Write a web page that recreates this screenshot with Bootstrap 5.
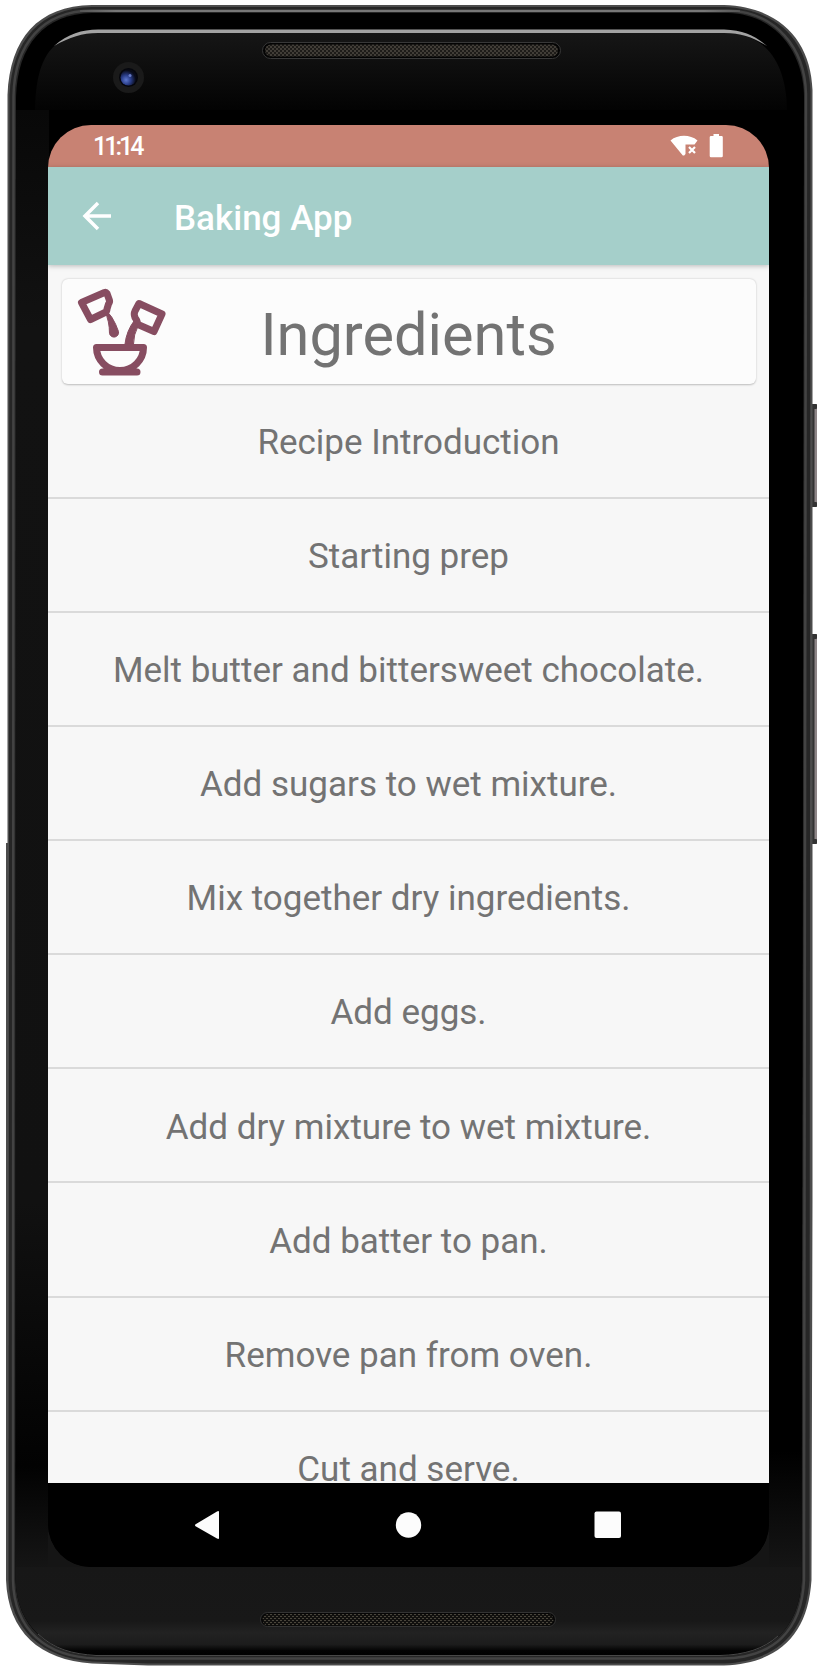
<!DOCTYPE html>
<html lang="en">
<head>
<meta charset="utf-8">
<meta name="viewport" content="width=device-width, initial-scale=1">
<title>Baking App</title>
<link href="https://cdn.jsdelivr.net/npm/bootstrap@5.3.0/dist/css/bootstrap.min.css" rel="stylesheet">
<style>
body{background:#fff;font-family:Roboto,sans-serif;overflow:hidden}
.phone{width:820px;height:1674px;padding:125px 51px 107px 48px}
.phone-shell{z-index:0;pointer-events:none}
.phone-screen{z-index:1;border-radius:43px;background:#000}
.status-bar{height:42px;background:#c88273;color:#fff;padding:0 45px 0 45px;font-size:25px;font-weight:500;line-height:42px}
.clock{letter-spacing:-3px;padding-top:2px}
.app-bar{height:98px;background:#a5cfca;color:#fff;padding:0 32px;box-shadow:0 1px 5px rgba(0,0,0,.25);z-index:2}
.app-title{font-size:35px;font-weight:500;line-height:1;margin-left:58px;padding-top:4px}
.recipe-steps{min-height:0;background:#f7f7f7}
.ingredients-card{margin:14px 13px 0 14px;height:105px;background:#fcfcfc;border:0;border-radius:6px;box-shadow:0 .5px 2px rgba(0,0,0,.24)}
.ingredients-card h1{font-size:59.5px;font-weight:400;color:#737373;line-height:1;padding-top:8px;margin-right:1px}
.pour-icon{left:14px;top:7px}
.step-list{margin-top:.4px}
.step-row{height:114.15px;font-size:35px;color:#737373;background:transparent;border:0;border-bottom:2px solid #dadada;border-radius:0;padding:5px 0 0;flex:none}
.nav-keys{height:84px;background:#000}
</style>
</head>
<body>
<div class="phone position-relative">
<svg class="phone-shell position-absolute top-0 start-0" width="820" height="1674" viewBox="0 0 820 1674" aria-hidden="true">
  <defs>
    <linearGradient id="face" x1="0" y1="0" x2="0" y2="1"><stop offset="0" stop-color="#161616"/><stop offset="1" stop-color="#030303"/></linearGradient>
    <linearGradient id="side" x1="0" y1="0" x2="0" y2="1"><stop offset="0" stop-color="#080808"/><stop offset=".15" stop-color="#121212"/><stop offset=".75" stop-color="#111"/><stop offset=".93" stop-color="#020202"/><stop offset="1" stop-color="#151515"/></linearGradient>
    <linearGradient id="sideR" x1="0" y1="0" x2="0" y2="1"><stop offset="0" stop-color="#000"/><stop offset=".92" stop-color="#000"/><stop offset="1" stop-color="#151515"/></linearGradient>
    <linearGradient id="chin" gradientUnits="userSpaceOnUse" x1="0" y1="1567" x2="0" y2="1657"><stop offset="0" stop-color="#171717"/><stop offset=".6" stop-color="#181818"/><stop offset=".73" stop-color="#222"/><stop offset=".86" stop-color="#1c1c1c"/><stop offset=".93" stop-color="#030303"/><stop offset="1" stop-color="#000"/></linearGradient>
    <linearGradient id="rim" gradientUnits="userSpaceOnUse" x1="60" y1="0" x2="760" y2="0"><stop offset="0" stop-color="#777" stop-opacity="0"/><stop offset=".08" stop-color="#777"/><stop offset=".92" stop-color="#777"/><stop offset="1" stop-color="#777" stop-opacity="0"/></linearGradient>
    <radialGradient id="lens" cx=".35" cy=".65" r=".6"><stop offset="0" stop-color="#5d78d0"/><stop offset=".5" stop-color="#293c86"/><stop offset="1" stop-color="#080a16"/></radialGradient>
    <pattern id="mesh" width="4" height="4" patternUnits="userSpaceOnUse"><rect width="4" height="4" fill="#1d1b18"/><path d="M0 0h2v2H0zM2 2h2v2H2z" fill="#413d37"/></pattern>
    <pattern id="mesh2" width="4" height="4" patternUnits="userSpaceOnUse"><rect width="4" height="4" fill="#11100e"/><path d="M0 0h2v1H0zM2 2h2v1H2z" fill="#4a463c"/></pattern>
    <clipPath id="glass"><path d="M16 98C17 44 45 14 92 13H728C774 14 803 50 804 96L801.500 1580C799 1628 772 1655 720 1656H96C48 1654 17 1627 15.500 1580Z"/></clipPath>
  </defs>
  <g fill="#8d8587"><rect x="812" y="404" width="5" height="103" rx="1"/><rect x="812" y="634" width="5" height="210" rx="1"/></g>
  <g fill="#333"><rect x="812" y="404" width="2.500" height="103"/><rect x="812" y="634" width="2.500" height="210"/><rect x="812" y="404" width="5" height="5" rx="1"/><rect x="812" y="502" width="5" height="5" rx="1"/><rect x="812" y="634" width="5" height="5" rx="1"/><rect x="812" y="839" width="5" height="5" rx="1"/></g>
  <path d="M7.500 95C10 38 38 6 92 5H724C782 7 811 43 812.500 90V1200L811.500 1580C808 1634 780 1663 724 1665.500H148L92 1663.500C40 1660 8 1632 6 1580V843H7.500Z" fill="#4c4c4c"/>
  <path d="M9.500 95C12 40 40 8 92 7H724C780 9 809 44 810.500 92L809.500 1580C806 1632 778 1661 724 1663.500H148L92 1661.500C42 1658 10 1630 8.500 1580Z" fill="#262626"/>
  <path d="M13.500 96C14.500 43 43 11 92 10.500H728C776 12 805 48 806 94L804 1580C802 1630 774 1658 722 1658.500H96C46 1657 14 1630 13 1580Z" fill="none" stroke="#434343" stroke-width="2.500"/>
  <rect x="80" y="10" width="660" height="2" fill="url(#rim)"/>
  <path d="M16 98C17 44 45 14 92 13H728C774 14 803 50 804 96L801.500 1580C799 1628 772 1655 720 1656H96C48 1654 17 1627 15.500 1580Z" fill="#000"/>
  <g clip-path="url(#glass)">
    <rect x="15" y="110" width="34" height="1458" fill="url(#side)"/>
    <rect x="769" y="110" width="34" height="1458" fill="url(#sideR)"/>
    <path d="M35 110C36 52 55 33 98 33H724C760 33 786 55 787 110Z" fill="url(#face)"/>
    <path d="M15 1567H803V1582C798 1632 774 1654 720 1655H96C48 1653 18 1627 15 1582Z" fill="url(#chin)"/>
    <path d="M48 1525H769V1567H48Z" fill="#151515"/>
  </g>
  <path d="M54 46C68 34 82 29.500 98 29.500H724C744 30 755 36 767 46C754 38 742 33 724 33H98C82 33 70 37 54 46Z" fill="#a3a3a3"/>
  <path d="M38 1634C54 1649 72 1654 96 1655.500H720C744 1655 764 1649 778 1636" fill="none" stroke="#484848" stroke-width="1"/>
  <circle cx="128.500" cy="77.500" r="15.500" fill="#1a1a1a"/><circle cx="128.500" cy="77.500" r="9.500" fill="#05060c"/><circle cx="128.500" cy="77.500" r="8" fill="url(#lens)"/><circle cx="130" cy="75.500" r="1.500" fill="#667bc8"/>
  <rect x="262.500" y="42.500" width="298" height="16" rx="8" fill="#030303" stroke="#383838"/><rect x="265" y="44.500" width="293" height="12" rx="6" fill="url(#mesh)"/>
  <rect x="260.500" y="1612.500" width="295" height="14" rx="7" fill="#050505" stroke="#333"/><rect x="262.500" y="1614" width="291" height="11.500" rx="5.500" fill="url(#mesh2)"/>
</svg>
<main class="phone-screen position-relative d-flex flex-column h-100 overflow-hidden">
  <header class="status-bar d-flex justify-content-between align-items-center flex-shrink-0">
    <span class="clock">11:14</span>
    <span class="d-flex">
      <svg width="54" height="24" viewBox="0 0 54 24" fill="#fff" aria-label="Wi-Fi and battery"><path d="M.5 6.500C8 .300 20 .300 27.500 6.500L24.500 10.500H15.500V20L14.200 21.500L12.800 21.500Z"/><path d="M19 13l6 6M25 13l-6 6" stroke="#fff" stroke-width="2.200"/><path d="M43.500 0h5.500v2h2.500q1.300 0 1.300 1.300V22q0 1.300-1.300 1.300H41q-1.300 0-1.300-1.300V3.300Q39.700 2 41 2h2.500z"/></svg>
    </span>
  </header>
  <nav class="app-bar position-relative d-flex align-items-center flex-shrink-0">
    <svg width="36" height="36" viewBox="0 0 36 36" fill="none" stroke="#fff" stroke-width="3.500" aria-label="Back"><path d="M31 18H5M18 5L5 18L18 31"/></svg>
    <span class="app-title">Baking App</span>
  </nav>
  <section class="recipe-steps d-flex flex-column flex-grow-1 overflow-hidden">
    <div class="card ingredients-card position-relative flex-row align-items-center justify-content-center flex-shrink-0">
      <svg class="pour-icon position-absolute" width="94" height="94" viewBox="76 286 94 94" fill="none" stroke="#874d61" stroke-width="7" stroke-linejoin="round" stroke-linecap="round" aria-hidden="true">
        <path d="M81.500 302.500L104.500 292.500Q106 292 107 293.500L109.500 300.500Q110 302 108.500 304L107 309Q107 311.500 105 312.500L90.500 319.500Z"/>
        <path d="M139 303.500L162 314L154 331.500L138 324.500Q137 320 135 317.500Q133.500 314 135 311Z"/>
        <path d="M105 312Q109 312 112 317.500Q116 324 118.500 331.500A4.500 4.500 0 0 1 109.500 333.500Q109.500 321 105 312Z" fill="#874d61" stroke-width="1"/>
        <path d="M134 321Q126.500 331 125 344H133.500Q133.500 335 138 326Z" fill="#874d61" stroke-width="1"/>
        <path d="M96.500 347.500H143.500C143.500 360 133 370.500 120 370.500C107 370.500 96.500 360 96.500 347.500ZM102.500 372H137"/>
      </svg>
      <h1 class="mb-0">Ingredients</h1>
    </div>
    <div class="step-list list-group list-group-flush">
      <div class="step-row d-flex align-items-center justify-content-center">Recipe Introduction</div>
      <div class="step-row d-flex align-items-center justify-content-center">Starting prep</div>
      <div class="step-row d-flex align-items-center justify-content-center">Melt butter and bittersweet chocolate.</div>
      <div class="step-row d-flex align-items-center justify-content-center">Add sugars to wet mixture.</div>
      <div class="step-row d-flex align-items-center justify-content-center">Mix together dry ingredients.</div>
      <div class="step-row d-flex align-items-center justify-content-center">Add eggs.</div>
      <div class="step-row d-flex align-items-center justify-content-center">Add dry mixture to wet mixture.</div>
      <div class="step-row d-flex align-items-center justify-content-center">Add batter to pan.</div>
      <div class="step-row d-flex align-items-center justify-content-center">Remove pan from oven.</div>
      <div class="step-row d-flex align-items-center justify-content-center">Cut and serve.</div>
    </div>
  </section>
  <footer class="nav-keys flex-shrink-0">
    <svg width="721" height="84" viewBox="48 1483 721 84" fill="#fcfcfc" aria-label="Back, home, recent apps"><path d="M196 1524L217 1511.500Q219 1510.500 219 1512V1538Q219 1539.500 217 1538.500L196 1526.500Q194 1525 196 1524Z"/><circle cx="408.500" cy="1525" r="12.700"/><rect x="594.500" y="1511.500" width="26.500" height="26.500" rx="2"/></svg>
  </footer>
</main>
</div>
<script src="https://cdn.jsdelivr.net/npm/bootstrap@5.3.0/dist/js/bootstrap.bundle.min.js"></script>
</body>
</html>
